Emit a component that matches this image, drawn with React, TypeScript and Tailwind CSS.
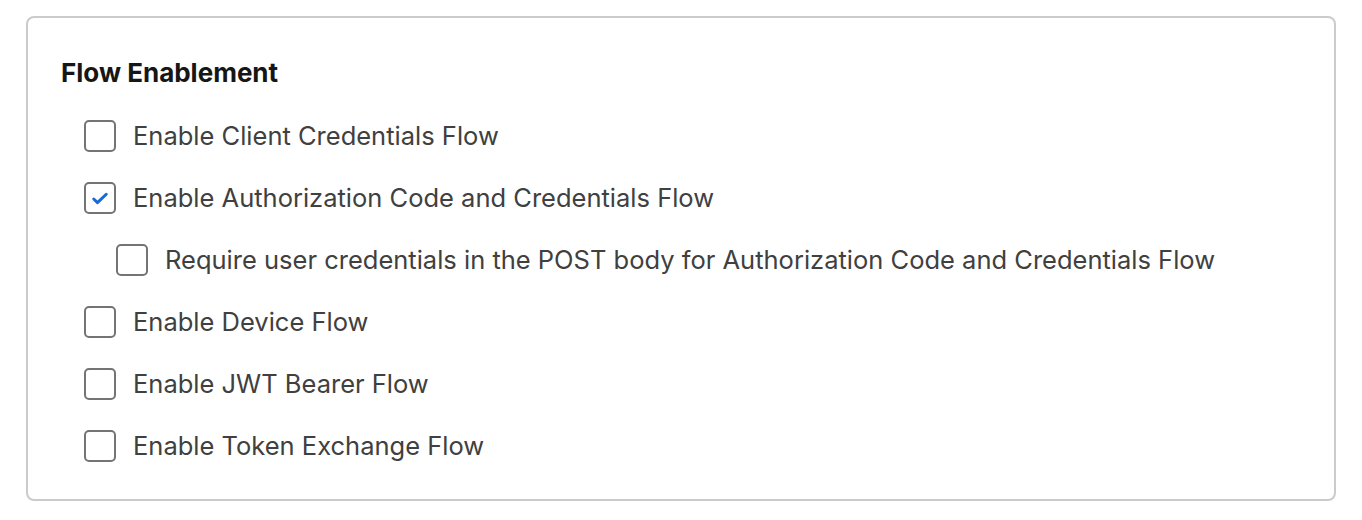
import React from 'react';

const flows = [
  { label: "Enable Client Credentials Flow", checked: false, nested: false },
  { label: "Enable Authorization Code and Credentials Flow", checked: true, nested: false },
  { label: "Require user credentials in the POST body for Authorization Code and Credentials Flow", checked: false, nested: true },
  { label: "Enable Device Flow", checked: false, nested: false },
  { label: "Enable JWT Bearer Flow", checked: false, nested: false },
  { label: "Enable Token Exchange Flow", checked: false, nested: false },
];

function Checkbox({ checked }: { checked: boolean }) {
  return (
    <span className="w-[32px] h-[32px] shrink-0 rounded-[5px] border-2 border-[#747474] bg-white flex items-center justify-center">
      {checked && (
        <svg viewBox="0 0 16 16" className="w-[20px] h-[20px]">
          <path d="M3 8.8l3 2.9L13 5" fill="none" stroke="#1b6ad3" strokeWidth="2.4" strokeLinecap="round" strokeLinejoin="round" />
        </svg>
      )}
    </span>
  );
}

export default function App() {
  return (
    <div className="w-[1362px] h-[520px] bg-white pt-[16px] pl-[26px] font-['Inter',sans-serif]">
      <div className="w-[1310px] h-[485px] border-2 border-[#cbcbcb] rounded-[8px] px-[33px] pt-[40px]">
        <h3 className="text-[26px] font-bold text-[#161616] leading-[30px]">Flow Enablement</h3>
        <div className="mt-[32px] pl-[23px] flex flex-col gap-[30px]">
          {flows.map((f, i) => (
            <label key={i} className={`flex items-center gap-[17px] h-[32px] ${f.nested ? 'pl-[32px]' : ''}`}>
              <Checkbox checked={f.checked} />
              <span className="text-[25.5px] text-[#404040] leading-[32px]">{f.label}</span>
            </label>
          ))}
        </div>
      </div>
    </div>
  );
}
